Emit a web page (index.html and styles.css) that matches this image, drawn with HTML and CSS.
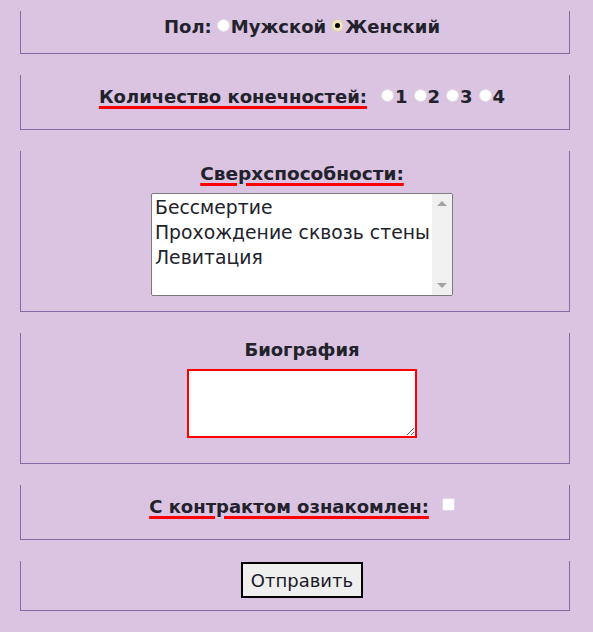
FILE: index.html
```html
<!DOCTYPE html>
<html lang="ru">
<head>
<meta charset="utf-8">
<link rel="stylesheet" href="styles.css">
</head>
<body>
<form class="form">
  <div class="box box-gender">
    <div class="row">
      <span class="label">Пол:</span>
      <label class="opt"><input type="radio" name="sex" class="radio">Мужской</label>
      <label class="opt"><input type="radio" name="sex" class="radio" checked>Женский</label>
    </div>
  </div>
  <div class="box box-limbs">
    <div class="row">
      <span class="label ul">Количество конечностей:</span>
      <span class="opts">
        <label class="opt"><input type="radio" name="limbs" class="radio">1</label>
        <label class="opt"><input type="radio" name="limbs" class="radio">2</label>
        <label class="opt"><input type="radio" name="limbs" class="radio">3</label>
        <label class="opt"><input type="radio" name="limbs" class="radio">4</label>
      </span>
    </div>
  </div>
  <div class="box box-powers">
    <div class="label ul">Сверхспособности:</div>
    <div class="listbox">
      <div class="options">
        <div class="option">Бессмертие</div>
        <div class="option">Прохождение сквозь стены</div>
        <div class="option">Левитация</div>
      </div>
      <div class="scrollbar">
        <span class="arrow up"></span>
        <span class="arrow down"></span>
      </div>
    </div>
  </div>
  <div class="box box-bio">
    <div class="label plain">Биография</div>
    <textarea class="bio"></textarea>
  </div>
  <div class="box box-contract">
    <div class="row">
      <span class="label ul">С контрактом ознакомлен:</span>
      <input type="checkbox" class="check">
    </div>
  </div>
  <div class="box box-submit">
    <button type="button" class="submit">Отправить</button>
  </div>
</form>
</body>
</html>
```

FILE: styles.css
```css
html, body {
  margin: 0;
  padding: 0;
  background: #dbc4e1;
}
body {
  font-family: "DejaVu Sans", sans-serif;
  color: #22222c;
}
.form {
  width: 550px;
  padding: 11px 0 0 20px;
}
.box {
  border: 1px solid #8a68a6;
  border-top: none;
  margin-bottom: 21px;
  display: flex;
  flex-direction: column;
  align-items: center;
}
.row {
  display: flex;
  align-items: center;
  height: 22px;
}
.label {
  font-size: 18px;
  font-weight: bold;
  line-height: 22px;
}
.box-powers .label {
  font-size: 18.5px;
}
.label.plain {
  font-weight: 600;
}
.ul {
  text-decoration: underline;
  text-decoration-color: #ff0000;
  text-decoration-thickness: 3px;
  text-underline-offset: 3px;
  text-decoration-skip-ink: auto;
}
.opt {
  display: inline-flex;
  align-items: center;
  font-size: 18px;
  font-weight: bold;
  line-height: 22px;
}
.box-gender .label { margin-right: 5px; }
.box-gender .opt + .opt { margin-left: 5px; }
.opts { margin-left: 14px; display: inline-flex; }
.opts .opt + .opt { margin-left: 6px; }
.radio {
  appearance: none;
  -webkit-appearance: none;
  width: 13px;
  height: 13px;
  margin: 0 1px 4px 0;
  border-radius: 50%;
  background: #fff;
  border: 1px solid #e4dde8;
  box-sizing: border-box;
  position: relative;
}
.radio:checked {
  background: #efe3c3;
  border-color: #d8ccb0;
}
.radio:checked::after {
  content: "";
  position: absolute;
  left: 3px;
  top: 3px;
  width: 5px;
  height: 5px;
  border-radius: 50%;
  background: #000;
}
.box-gender { padding: 5px 0 15px 14px; }
.box-limbs { padding: 11px 0 21px 14px; }
.box-powers { padding: 12px 0 15px 14px; }
.box-bio { padding: 6px 0 25px 14px; }
.box-contract { padding: 11px 0 21px 14px; }
.box-submit { padding: 1px 0 12px 14px; }

.listbox {
  margin-top: 8px;
  width: 302px;
  height: 103px;
  box-sizing: border-box;
  background: #fff;
  border: 1px solid #7a7a7a;
  border-radius: 2px;
  display: flex;
}
.options {
  flex: 1;
  padding: 1px 0 0 3px;
  font-size: 18.8px;
  line-height: 25px;
  white-space: nowrap;
  overflow: hidden;
}
.scrollbar {
  width: 20px;
  background: #f0f0f0;
  position: relative;
}
.arrow {
  position: absolute;
  left: 5px;
  width: 0;
  height: 0;
  border-left: 5px solid transparent;
  border-right: 5px solid transparent;
}
.arrow.up { top: 7px; border-bottom: 5px solid #a3a3a3; }
.arrow.down { bottom: 7px; border-top: 5px solid #a3a3a3; }

.bio {
  margin-top: 8px;
  width: 230px;
  height: 69px;
  box-sizing: border-box;
  border: 2px solid #ff0000;
  background: #fff;
  resize: both;
  display: block;
}
.check {
  appearance: none;
  -webkit-appearance: none;
  width: 13px;
  height: 13px;
  margin: 0 0 6px 13px;
  background: #fff;
  border: 1px solid #e0d8e4;
  border-radius: 2px;
  box-sizing: border-box;
}
.submit {
  font-family: "DejaVu Sans", sans-serif;
  font-size: 18px;
  color: #1a1a28;
  background: #efefef;
  border: 2px solid #000;
  padding: 0 8px;
  height: 36px;
  border-radius: 0;
}
```
